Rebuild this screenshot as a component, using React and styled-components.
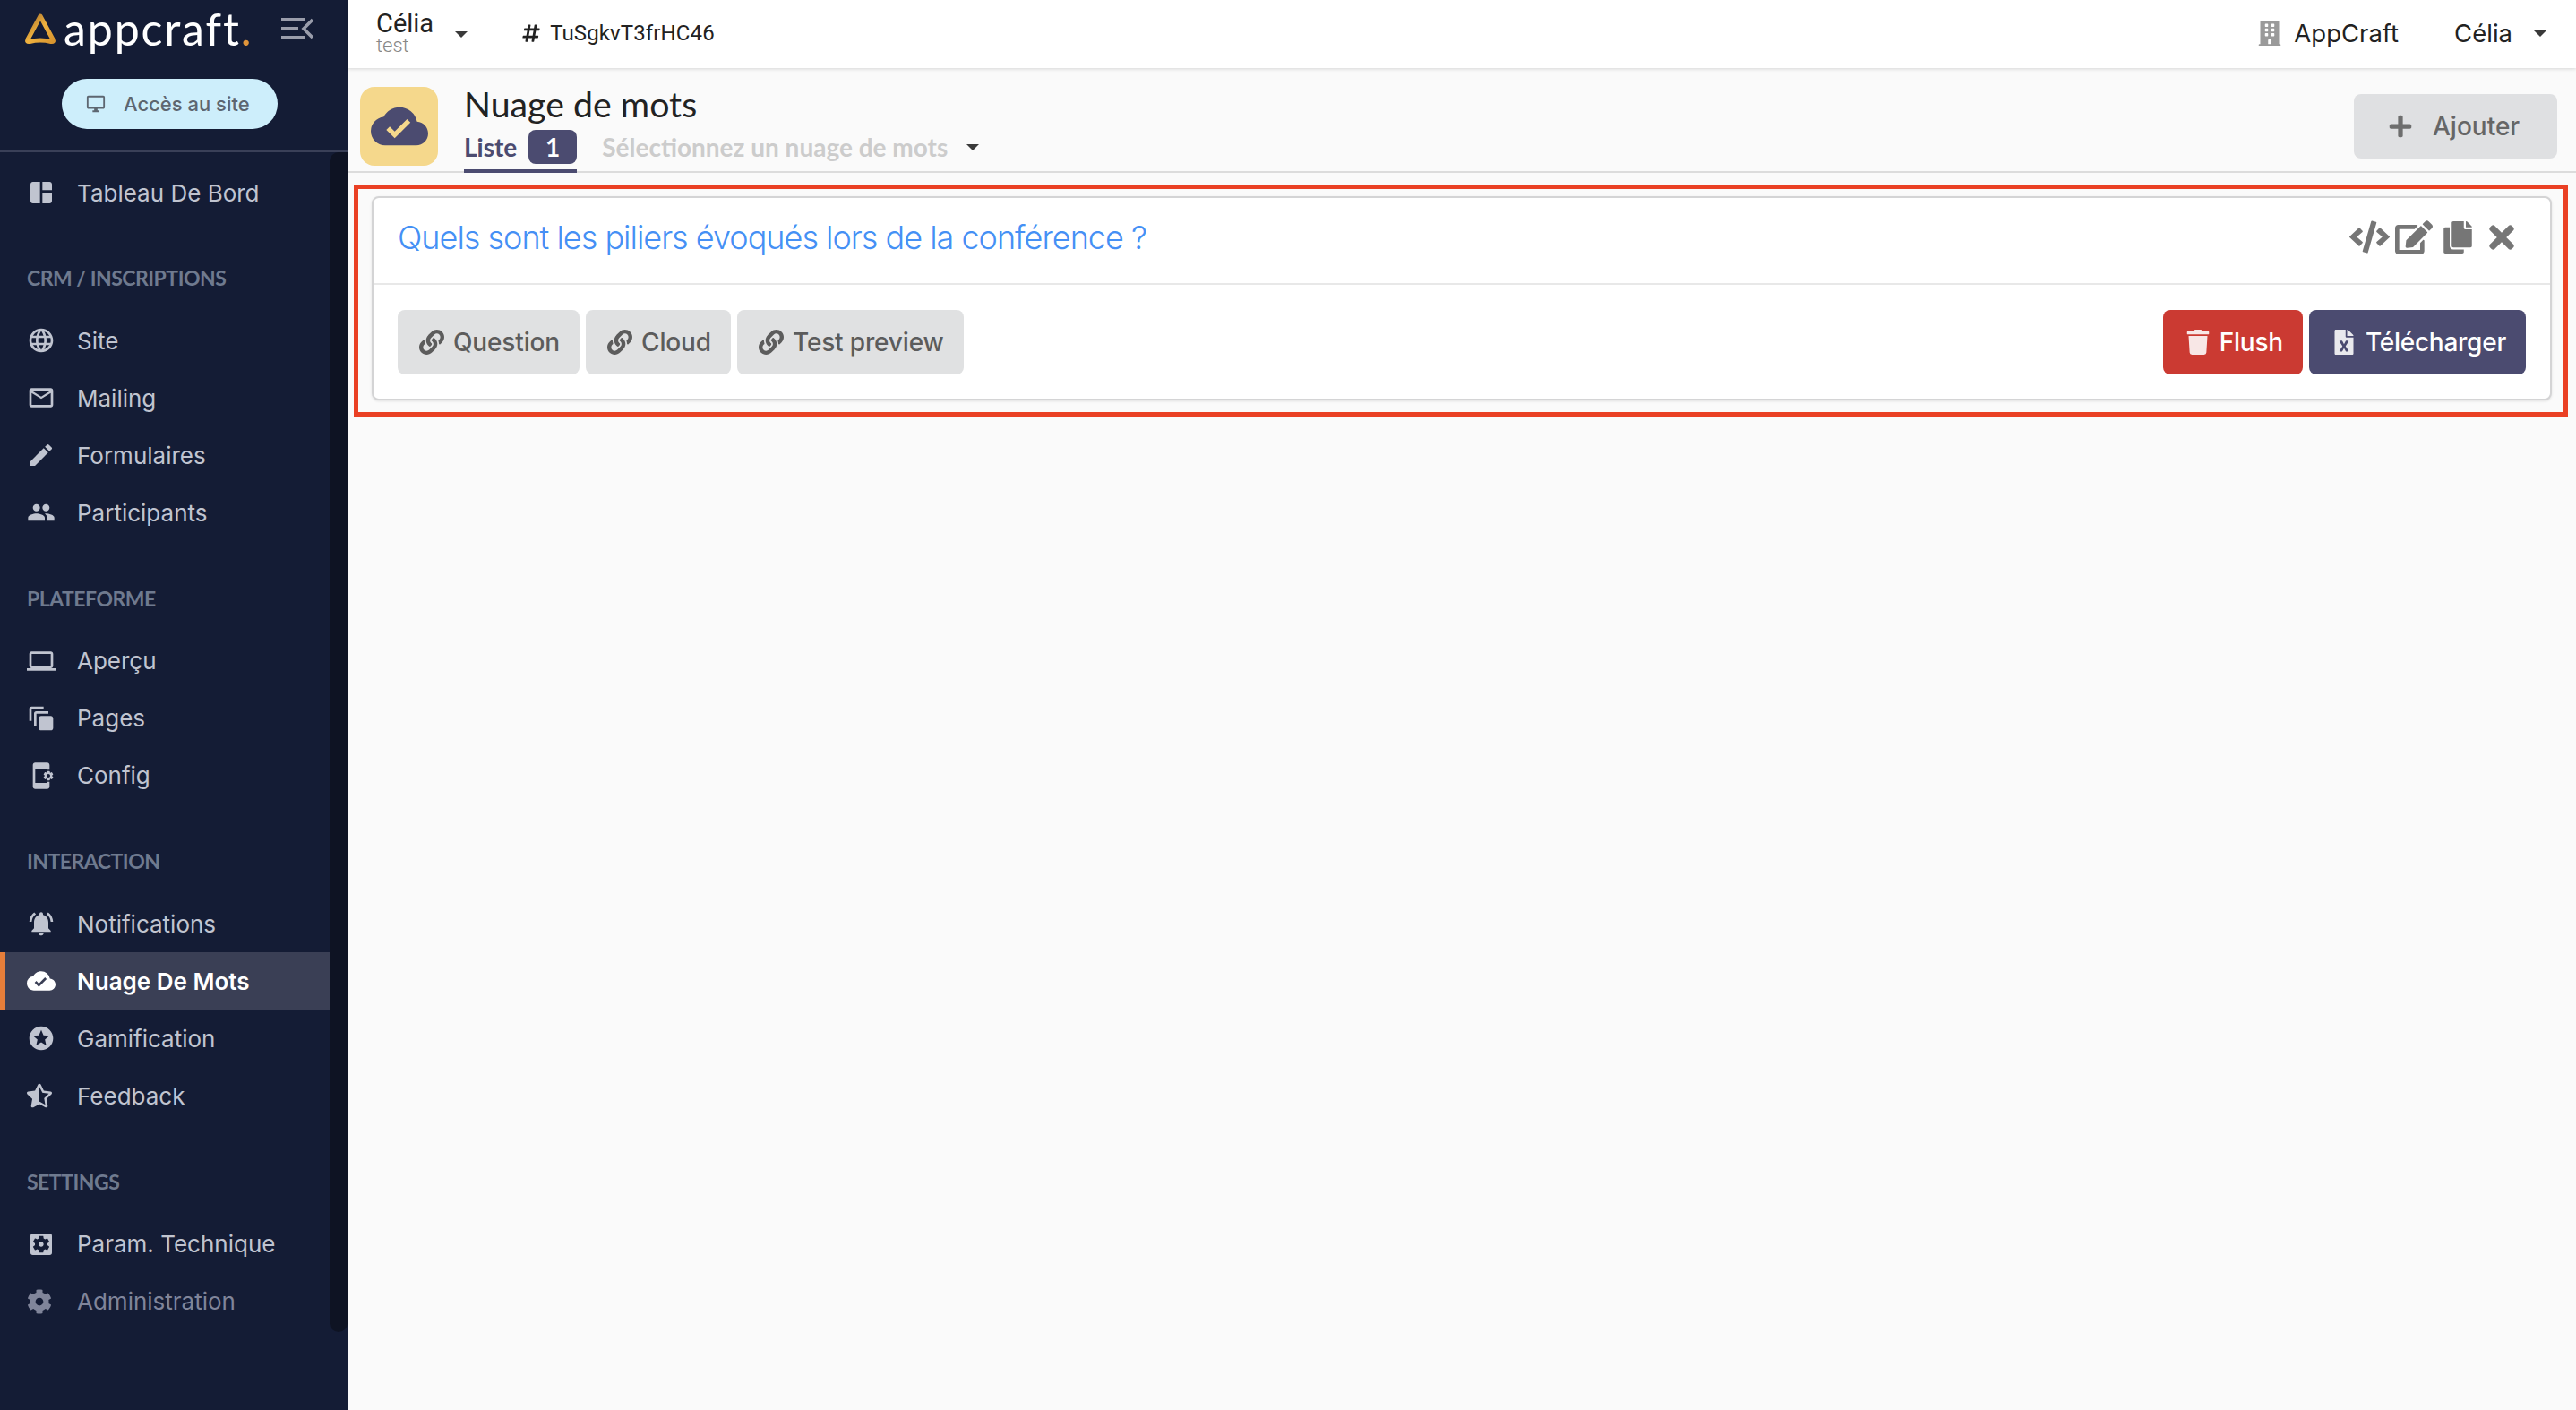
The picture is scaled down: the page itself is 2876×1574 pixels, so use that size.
import React from "react";
import styled, { createGlobalStyle } from "styled-components";
import {
  FaBuilding,
  FaCode,
  FaCopy,
  FaEdit,
  FaFileExcel,
  FaHashtag,
  FaLink,
  FaPlus,
  FaStarHalfAlt,
  FaTimes,
  FaTrash,
  FaCog,
} from "react-icons/fa";
import {
  MdAppSettingsAlt,
  MdAutoAwesomeMotion,
  MdCloudDone,
  MdCreate,
  MdLanguage,
  MdLaptop,
  MdMailOutline,
  MdNotificationsActive,
  MdOutlineDesktopWindows,
  MdPeople,
  MdSettingsApplications,
  MdSpaceDashboard,
  MdStars,
} from "react-icons/md";

const GlobalStyle = createGlobalStyle`
  html, body {
    margin: 0;
    padding: 0;
    height: 100%;
    background: #fafafa;
    font-family: "Inter", "Liberation Sans", sans-serif;
  }
  * { box-sizing: border-box; }
`;

const navSections = [
  {
    items: [{ label: "Tableau De Bord", icon: MdSpaceDashboard }],
  },
  {
    title: "CRM / INSCRIPTIONS",
    items: [
      { label: "Site", icon: MdLanguage },
      { label: "Mailing", icon: MdMailOutline },
      { label: "Formulaires", icon: MdCreate },
      { label: "Participants", icon: MdPeople },
    ],
  },
  {
    title: "PLATEFORME",
    items: [
      { label: "Aperçu", icon: MdLaptop },
      { label: "Pages", icon: MdAutoAwesomeMotion },
      { label: "Config", icon: MdAppSettingsAlt },
    ],
  },
  {
    title: "INTERACTION",
    items: [
      { label: "Notifications", icon: MdNotificationsActive },
      { label: "Nuage De Mots", icon: MdCloudDone, active: true },
      { label: "Gamification", icon: MdStars },
      { label: "Feedback", icon: FaStarHalfAlt, small: true },
    ],
  },
  {
    title: "SETTINGS",
    items: [
      { label: "Param. Technique", icon: MdSettingsApplications },
      { label: "Administration", icon: FaCog, small: true, dim: true },
    ],
  },
];

export default function App() {
  return (
    <Page>
      <GlobalStyle />
      <Sidebar>
        <SidebarHead>
          <LogoRow>
            <Logo>
              <svg width="36" height="36" viewBox="0 0 36 36">
                <defs>
                  <linearGradient id="logoGold" x1="0" y1="0" x2="1" y2="1">
                    <stop offset="0" stopColor="#a8702a" />
                    <stop offset="0.5" stopColor="#efb23f" />
                    <stop offset="1" stopColor="#d8952f" />
                  </linearGradient>
                </defs>
                <path
                  d="M18 4 L32 30 Q33.5 33 30 32.5 Q18 29.5 6 32.5 Q2.5 33 4 30 Z"
                  fill="none"
                  stroke="url(#logoGold)"
                  strokeWidth="5"
                  strokeLinejoin="round"
                />
              </svg>
              <LogoText>
                appcraft<LogoDot>.</LogoDot>
              </LogoText>
            </Logo>
            <svg width="36" height="24" viewBox="0 0 36 24" fill="#9a9dab">
              <rect x="0" y="0" width="26" height="3.6" />
              <rect x="0" y="10" width="19" height="3.6" />
              <rect x="0" y="20" width="26" height="3.6" />
              <path d="M35 2 L25 12 L35 22" fill="none" stroke="#9a9dab" strokeWidth="3.6" />
            </svg>
          </LogoRow>
          <SiteButton>
            <MdOutlineDesktopWindows size={22} />
            Accès au site
          </SiteButton>
        </SidebarHead>
        <SidebarBody>
          <Nav>
            {navSections.map((section, i) => (
              <div key={i}>
                {section.title && <SectionTitle>{section.title}</SectionTitle>}
                {section.items.map((item) => (
                  <NavItem key={item.label} $active={item.active} $dim={item.dim}>
                    <NavIcon>
                      <item.icon size={item.small ? 28 : 32} />
                    </NavIcon>
                    {item.label}
                  </NavItem>
                ))}
              </div>
            ))}
          </Nav>
          <ScrollTrack />
        </SidebarBody>
      </Sidebar>

      <Main>
        <TopBar>
          <EventPicker>
            <EventName>
              <strong>Célia</strong>
              <small>test</small>
            </EventName>
            <Caret />
          </EventPicker>
          <EventId>
            <FaHashtag size={22} />
            TuSgkvT3frHC46
          </EventId>
          <TopRight>
            <Company>
              <FaBuilding size={28} color="#9a9a9a" />
              AppCraft
            </Company>
            <UserMenu>
              Célia
              <Caret />
            </UserMenu>
          </TopRight>
        </TopBar>

        <PageHeader>
          <HeaderIcon>
            <MdCloudDone size={64} color="#4b4b70" />
          </HeaderIcon>
          <HeaderText>
            <PageTitle>Nuage de mots</PageTitle>
            <Tabs>
              <ActiveTab>
                Liste
                <TabCount>1</TabCount>
              </ActiveTab>
              <TabSelect>
                Sélectionnez un nuage de mots
                <Caret />
              </TabSelect>
            </Tabs>
          </HeaderText>
          <AddButton>
            <FaPlus size={28} />
            Ajouter
          </AddButton>
        </PageHeader>

        <Content>
          <Highlight>
            <Card>
              <CardHead>
                <CardTitle>Quels sont les piliers évoqués lors de la conférence ?</CardTitle>
                <CardActions>
                  <ActionIcon>
                    <FaCode size={45} />
                  </ActionIcon>
                  <ActionIcon>
                    <FaEdit size={42} />
                  </ActionIcon>
                  <ActionIcon>
                    <FaCopy size={36} />
                  </ActionIcon>
                  <ActionIcon>
                    <FaTimes size={40} />
                  </ActionIcon>
                </CardActions>
              </CardHead>
              <CardFoot>
                <LinkButton>
                  <FaLink size={28} />
                  Question
                </LinkButton>
                <LinkButton>
                  <FaLink size={28} />
                  Cloud
                </LinkButton>
                <LinkButton>
                  <FaLink size={28} />
                  Test preview
                </LinkButton>
                <FootSpacer />
                <ActionButton $color="#cb3a32">
                  <FaTrash size={28} />
                  Flush
                </ActionButton>
                <ActionButton $color="#4b4b70">
                  <FaFileExcel size={28} />
                  Télécharger
                </ActionButton>
              </CardFoot>
            </Card>
          </Highlight>
        </Content>
      </Main>
    </Page>
  );
}

const Page = styled.div`
  display: flex;
  width: 2876px;
  height: 1574px;
  overflow: hidden;
  background: #fafafa;
`;

const Sidebar = styled.aside`
  width: 388px;
  flex-shrink: 0;
  display: flex;
  flex-direction: column;
  background: #141c35;
`;

const SidebarHead = styled.div`
  height: 170px;
  border-bottom: 2px solid #3a4058;
`;

const LogoRow = styled.div`
  display: flex;
  align-items: center;
  justify-content: space-between;
  height: 60px;
  padding: 4px 38px 0 27px;
`;

const Logo = styled.div`
  display: flex;
  align-items: center;
  gap: 8px;
`;

const LogoText = styled.span`
  font-family: "Lato", sans-serif;
  font-size: 50px;
  line-height: 56px;
  font-weight: 400;
  color: #fff;
  letter-spacing: 1.9px;
`;

const LogoDot = styled.span`
  color: #e0953a;
`;

const SiteButton = styled.div`
  width: 241px;
  height: 56px;
  margin: 28px 0 0 69px;
  display: flex;
  align-items: center;
  gap: 20px;
  padding-left: 27px;
  border-radius: 28px;
  background: #cdeefb;
  color: #5d6670;
  font-size: 22px;
  font-weight: 500;
`;

const SidebarBody = styled.div`
  flex: 1;
  display: flex;
  align-items: flex-start;
`;

const Nav = styled.nav`
  flex: 1;
  padding-top: 13px;
`;

const ScrollTrack = styled.div`
  width: 20px;
  height: 1317px;
  background: #0e1323;
  border-radius: 10px 0 10px 10px;
`;

const SectionTitle = styled.div`
  margin: 53.4px 0 28px;
  padding-left: 30px;
  height: 20px;
  line-height: 20px;
  font-family: "Lato", sans-serif;
  font-size: 23px;
  font-weight: 700;
  letter-spacing: -0.5px;
  color: #6f7a8f;
`;

const NavItem = styled.div`
  height: 64px;
  display: flex;
  align-items: center;
  font-family: "Inter", sans-serif;
  font-size: 26px;
  font-weight: ${(p) => (p.$active ? 600 : 400)};
  color: ${(p) => (p.$active ? "#fff" : p.$dim ? "#80859a" : "#c0c4d0")};
  background: ${(p) => (p.$active ? "#3a3f55" : "transparent")};
  box-shadow: ${(p) => (p.$active ? "inset 6px 0 0 #e67e3a" : "none")};
`;

const NavIcon = styled.span`
  width: 86px;
  flex-shrink: 0;
  display: flex;
  padding-left: 30px;
`;

const Main = styled.main`
  flex: 1;
  min-width: 0;
  display: flex;
  flex-direction: column;
`;

const TopBar = styled.header`
  height: 76px;
  flex-shrink: 0;
  display: flex;
  align-items: center;
  padding: 0 33px 0 32px;
  background: #fff;
  box-shadow: 0 1px 4px rgba(0, 0, 0, 0.15);
  color: #222;
`;

const EventPicker = styled.div`
  display: flex;
  align-items: center;
  gap: 24px;
`;

const EventName = styled.div`
  display: flex;
  flex-direction: column;
  margin-top: -4px;
  font-family: "Roboto", sans-serif;
  strong {
    font-size: 29px;
    font-weight: 400;
    line-height: 30px;
  }
  small {
    font-size: 22px;
    font-weight: 300;
    line-height: 20px;
    color: #888;
  }
`;

const Caret = styled.span`
  display: inline-block;
  width: 0;
  height: 0;
  border-left: 7px solid transparent;
  border-right: 7px solid transparent;
  border-top: 7px solid #3a3a3a;
`;

const EventId = styled.div`
  display: flex;
  align-items: center;
  gap: 10px;
  margin: -2px 0 0 60px;
  font-family: "Roboto", sans-serif;
  font-size: 24px;
  letter-spacing: 0.12px;
`;

const TopRight = styled.div`
  margin: -2px 0 0 auto;
  display: flex;
  align-items: center;
  gap: 62px;
  font-family: "Inter", sans-serif;
  font-size: 27.5px;
`;

const Company = styled.div`
  display: flex;
  align-items: center;
  gap: 13px;
`;

const UserMenu = styled.div`
  display: flex;
  align-items: center;
  gap: 24px;
`;

const PageHeader = styled.div`
  height: 117px;
  flex-shrink: 0;
  display: flex;
  align-items: flex-start;
  padding: 21px 21px 0 14px;
  border-bottom: 2px solid #dcdcdc;
`;

const HeaderIcon = styled.div`
  width: 87px;
  height: 88px;
  flex-shrink: 0;
  display: flex;
  align-items: center;
  justify-content: center;
  border-radius: 16px;
  background: #f5d88c;
`;

const HeaderText = styled.div`
  margin-left: 29px;
  height: 96px;
  display: flex;
  flex-direction: column;
  justify-content: space-between;
`;

const PageTitle = styled.h1`
  margin: 0;
  font-family: "Lato", sans-serif;
  font-size: 39.3px;
  line-height: 38px;
  font-weight: 400;
  color: #222;
`;

const Tabs = styled.div`
  display: flex;
  align-items: flex-start;
  font-family: "Lato", sans-serif;
  font-size: 28px;
`;

const ActiveTab = styled.div`
  height: 48px;
  display: flex;
  align-items: flex-start;
  gap: 13px;
  border-bottom: 4px solid #4b4b70;
  color: #4b4b70;
  font-weight: 700;
  line-height: 38px;
`;

const TabCount = styled.span`
  width: 54px;
  height: 38px;
  border-radius: 8px;
  background: #4b4b70;
  color: #fff;
  text-align: center;
`;

const TabSelect = styled.div`
  display: flex;
  align-items: center;
  gap: 21px;
  height: 38px;
  margin-left: 28px;
  color: #cccccc;
  font-weight: 700;
`;

const AddButton = styled.div`
  margin: 8px 0 0 auto;
  width: 227px;
  height: 72px;
  display: flex;
  align-items: center;
  gap: 22px;
  padding-left: 38px;
  border-radius: 8px;
  background: #dfe0e2;
  color: #666;
  font-size: 28px;
  font-weight: 500;
  svg {
    color: #6e6e6e;
  }
`;

const Content = styled.div`
  flex: 1;
  padding: 13px 9px 0 7px;
`;

const Highlight = styled.div`
  height: 259px;
  padding: 8px 13px 8px 15px;
  border: 5px solid #ea4024;
`;

const Card = styled.section`
  height: 228px;
  background: #fff;
  border: 2px solid #d4d4d5;
  border-radius: 8px;
  box-shadow: 0 1px 3px rgba(0, 0, 0, 0.1);
`;

const CardHead = styled.div`
  height: 97px;
  display: flex;
  align-items: center;
  justify-content: space-between;
  padding: 0 30px 8px 27px;
  border-bottom: 2px solid #e8e8e8;
`;

const CardTitle = styled.h2`
  margin: 0;
  font-family: "Inter", sans-serif;
  font-size: 36px;
  font-weight: 300;
  letter-spacing: -1px;
  color: #4590f5;
`;

const CardActions = styled.div`
  display: flex;
  align-items: center;
  color: #767676;
`;

const ActionIcon = styled.span`
  width: 49px;
  display: flex;
  justify-content: center;
`;

const CardFoot = styled.div`
  display: flex;
  gap: 7px;
  padding: 28px 27px 0;
`;

const FootSpacer = styled.div`
  flex: 1;
`;

const LinkButton = styled.div`
  height: 72px;
  display: flex;
  align-items: center;
  gap: 10px;
  padding: 0 22px 0 24px;
  border-radius: 8px;
  background: #e0e1e2;
  color: #5c5c5c;
  font-size: 28px;
  font-weight: 500;
  letter-spacing: -0.15px;
`;

const ActionButton = styled.div`
  height: 72px;
  display: flex;
  align-items: center;
  gap: 10px;
  padding: 0 22px 0 25px;
  border-radius: 8px;
  background: ${(p) => p.$color};
  color: #fff;
  font-size: 28px;
  font-weight: 500;
  letter-spacing: -0.25px;
  svg {
    opacity: 0.88;
  }
`;
